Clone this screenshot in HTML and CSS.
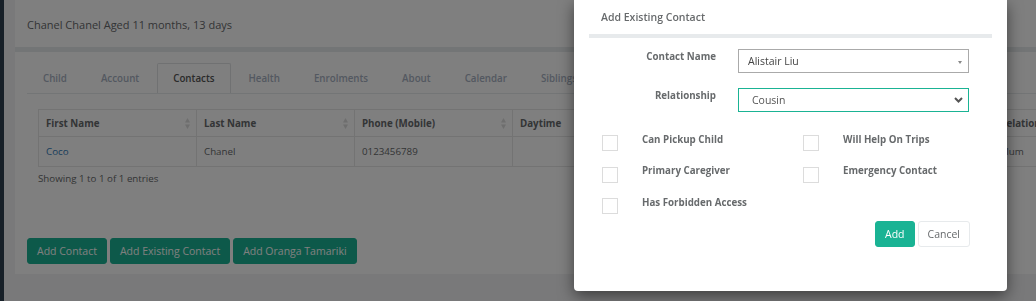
FILE: index.html
```html
<!DOCTYPE html>
<html lang="en">
<head>
  <meta charset="UTF-8">
  <meta name="viewport" content="width=device-width, initial-scale=1.0">
  <title>Child - Contacts</title>
  <link rel="stylesheet" href="styles.css">
</head>
<body>
  <div class="nav-edge"></div>
  <div class="wrapper">
    <div class="page-heading">Chanel Chanel Aged 11 months, 13 days</div>
    <div class="ibox">
      <ul class="tabs">
        <li><a href="#">Child</a></li>
        <li><a href="#">Account</a></li>
        <li><a href="#" class="active">Contacts</a></li>
        <li><a href="#">Health</a></li>
        <li><a href="#">Enrolments</a></li>
        <li><a href="#">About</a></li>
        <li><a href="#">Calendar</a></li>
        <li><a href="#">Siblings</a></li>
        <li><a href="#">Notes</a></li>
      </ul>
      <div class="tab-content">
        <table class="contacts">
          <colgroup>
            <col style="width:158px"><col style="width:158px"><col style="width:158px">
            <col style="width:160px"><col style="width:160px"><col style="width:160px">
            <col style="width:160px">
          </colgroup>
          <thead>
            <tr>
              <th><div class="th-inner">First Name<svg class="sort" width="5" height="11" viewBox="0 0 5 11"><path d="M2.5 0L5 4.5H0z M0 6.5H5L2.5 11z"/></svg></div></th>
              <th><div class="th-inner">Last Name<svg class="sort" width="5" height="11" viewBox="0 0 5 11"><path d="M2.5 0L5 4.5H0z M0 6.5H5L2.5 11z"/></svg></div></th>
              <th><div class="th-inner">Phone (Mobile)<svg class="sort" width="5" height="11" viewBox="0 0 5 11"><path d="M2.5 0L5 4.5H0z M0 6.5H5L2.5 11z"/></svg></div></th>
              <th><div class="th-inner">Daytime<svg class="sort" width="5" height="11" viewBox="0 0 5 11"><path d="M2.5 0L5 4.5H0z M0 6.5H5L2.5 11z"/></svg></div></th>
              <th><div class="th-inner">Evening<svg class="sort" width="5" height="11" viewBox="0 0 5 11"><path d="M2.5 0L5 4.5H0z M0 6.5H5L2.5 11z"/></svg></div></th>
              <th><div class="th-inner">Email<svg class="sort" width="5" height="11" viewBox="0 0 5 11"><path d="M2.5 0L5 4.5H0z M0 6.5H5L2.5 11z"/></svg></div></th>
              <th><div class="th-inner">Relationship<svg class="sort" width="5" height="11" viewBox="0 0 5 11"><path d="M2.5 0L5 4.5H0z M0 6.5H5L2.5 11z"/></svg></div></th>
            </tr>
          </thead>
          <tbody>
            <tr>
              <td><a href="#">Coco</a></td>
              <td>Chanel</td>
              <td>0123456789</td>
              <td></td>
              <td></td>
              <td></td>
              <td>Mum</td>
            </tr>
          </tbody>
        </table>
        <div class="info">Showing 1 to 1 of 1 entries</div>
      </div>
      <div class="actions">
        <button class="btn btn-primary">Add Contact</button>
        <button class="btn btn-primary">Add Existing Contact</button>
        <button class="btn btn-primary">Add Oranga Tamariki</button>
      </div>
    </div>
  </div>

  <div class="backdrop"></div>
  <div class="modal">
    <div class="modal-title">Add Existing Contact</div>
    <div class="modal-body">
      <div class="form-row">
        <label>Contact Name</label>
        <div class="select">
          <span>Alistair Liu</span>
          <span class="caret"></span>
        </div>
      </div>
      <div class="form-row">
        <label>Relationship</label>
        <div class="select select-focus">
          <span>Cousin</span>
          <svg width="9" height="6" viewBox="0 0 9 6"><path d="M1 1l3.5 3.5L8 1" fill="none" stroke="#555" stroke-width="2"/></svg>
        </div>
      </div>
      <div class="checks">
        <div class="check"><span class="box"></span>Can Pickup Child</div>
        <div class="check"><span class="box"></span>Will Help On Trips</div>
        <div class="check"><span class="box"></span>Primary Caregiver</div>
        <div class="check"><span class="box"></span>Emergency Contact</div>
        <div class="check"><span class="box"></span>Has Forbidden Access</div>
      </div>
      <div class="modal-footer">
        <button class="btn btn-primary">Add</button>
        <button class="btn btn-white">Cancel</button>
      </div>
    </div>
  </div>
</body>
</html>
```

FILE: styles.css
```css
* { box-sizing: border-box; margin: 0; padding: 0; }
body {
  font-family: 'Open Sans', 'Liberation Sans', sans-serif;
  font-size: 9.75px;
  color: #676a6c;
  background: #f3f3f4;
  width: 1036px;
  height: 301px;
  overflow: hidden;
  display: flex;
}
a { color: #337ab7; text-decoration: none; }
.nav-edge { width: 4px; flex-shrink: 0; background: #2f4050; }
.wrapper { flex: 1; min-width: 0; padding-left: 11px; }
.page-heading {
  height: 47px;
  background: #fff;
  padding: 2px 12px 0;
  display: flex;
  align-items: center;
  font-size: 11px;
}
.ibox {
  height: 227px;
  background: #fff;
  border-top: 5px solid #e7eaec;
  padding: 11px 0 10px 12px;
  display: flex;
  flex-direction: column;
  overflow: hidden;
}
.tabs {
  list-style: none;
  display: flex;
  border-bottom: 1px solid #e7eaec;
}
.tabs li { margin-right: 2px; }
.tabs a {
  display: block;
  padding: 7px 15px;
  line-height: 15px;
  border: 1px solid transparent;
  border-bottom: 0;
  border-radius: 2px 2px 0 0;
  color: #a7b1c2;
  font-weight: 600;
  white-space: nowrap;
}
.tabs a.active { color: #555; border-color: #e0e2e4; }
.tab-content { padding: 15px 0 0 11px; }
.contacts {
  border-collapse: collapse;
  table-layout: fixed;
  width: 1114px;
}
.contacts th, .contacts td {
  border: 1px solid #e7e7e7;
  text-align: left;
  white-space: nowrap;
}
.contacts th {
  height: 27px;
  padding: 0 6px 0 7px;
  font-weight: 700;
}
.contacts td { height: 30px; padding: 0 7px; }
.th-inner {
  display: flex;
  justify-content: space-between;
  align-items: center;
}
.sort { fill: #dcdcdc; flex-shrink: 0; }
.info { padding-top: 4px; line-height: 15px; }
.actions { margin-top: auto; display: flex; gap: 3px; }
.btn {
  height: 26px;
  padding: 0 9px;
  font-family: inherit;
  font-size: 10.5px;
  line-height: 24px;
  border: 1px solid;
  border-radius: 3px;
  cursor: pointer;
}
.btn-primary { background: #1ab394; border-color: #1ab394; color: #fff; }
.btn-white { background: #fff; border-color: #e7eaec; color: #676a6c; }

.backdrop {
  position: fixed;
  inset: 0;
  background: rgba(0, 0, 0, 0.5);
}
.modal {
  position: absolute;
  left: 574px;
  top: 0;
  width: 433px;
  height: 291px;
  background: #fff;
  border-radius: 0 0 4px 4px;
  box-shadow: 0 5px 15px rgba(0, 0, 0, 0.5);
}
.modal-title {
  height: 34px;
  padding-left: 27px;
  display: flex;
  align-items: center;
  font-size: 10.5px;
  font-weight: 600;
}
.modal-body {
  margin: 0 15px;
  border-top: 4px solid #e7eaec;
  padding-top: 11px;
}
.form-row {
  display: grid;
  grid-template-columns: 127px 231px;
  column-gap: 22px;
  margin-bottom: 15px;
}
.form-row label {
  text-align: right;
  font-weight: 700;
  line-height: 15px;
}
.select {
  height: 24px;
  border: 1px solid #aaa;
  padding: 0 6px 0 9px;
  display: flex;
  align-items: center;
  justify-content: space-between;
  font-size: 10.5px;
  color: #444;
}
.caret {
  margin-top: 2px;
  border-top: 3px solid #888;
  border-left: 2.5px solid transparent;
  border-right: 2.5px solid transparent;
}
.select-focus { border-color: #1ab394; padding: 0 5px 0 13px; color: #555; }
.checks {
  margin-top: 19.5px;
  padding-left: 13px;
  display: grid;
  grid-template-columns: 201px 1fr;
  row-gap: 12px;
}
.check {
  display: flex;
  align-items: flex-start;
  font-weight: 700;
  line-height: 15px;
}
.box {
  width: 16px;
  height: 16px;
  margin: 3.5px 24px 0 0;
  border: 1px solid #dcdcdc;
  flex-shrink: 0;
}
.modal-footer {
  margin-top: 6.5px;
  padding-right: 22px;
  display: flex;
  justify-content: flex-end;
  gap: 3px;
}
```
